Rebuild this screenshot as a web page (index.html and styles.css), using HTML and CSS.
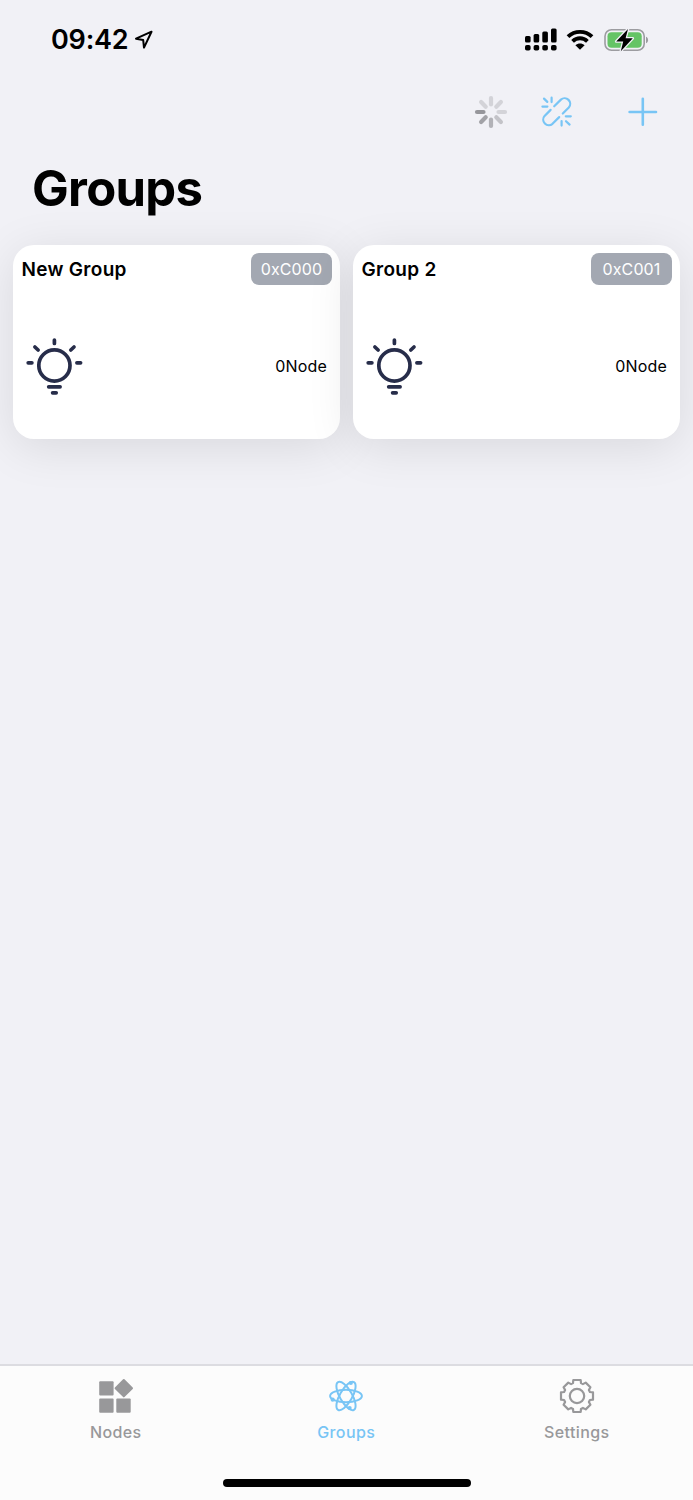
FILE: index.html
```
<!DOCTYPE html>
<html lang="en">
<head>
    <meta charset="UTF-8">
    <meta name="viewport" content="width=device-width, initial-scale=1.0">
    <title>Groups</title>
    <link rel="stylesheet" href="styles.css">
</head>
<body>
    <!-- Shared bulb icon -->
    <svg class="sprite" width="0" height="0">
        <symbol id="bulb" viewBox="0 0 60 60">
            <g fill="none" stroke="#272d4a" stroke-width="3.7" stroke-linecap="round">
                <circle cx="30.4" cy="28.5" r="15.6"/>
                <path d="M30.4 3v3.5M10.9 10l3.2 3M50 10l-3.2 3M4.2 25.8h3.7M52.9 25.8h3.7M24.7 49.8h11.4M28.6 55.8h3.6"/>
            </g>
        </symbol>
    </svg>

    <div class="status-bar">
        <span class="time">09:42</span>
        <svg class="location" width="20" height="20" viewBox="0 0 20 20">
            <path d="M17.5 1.7L2 8.7l7.2 1.4.8 7.5z" fill="none" stroke="#000" stroke-width="2" stroke-linejoin="round"/>
        </svg>
        <svg class="signal" width="32" height="24" viewBox="0 0 32 24">
            <rect x="0" y="8" width="5.6" height="6.5" rx="1.5"/>
            <rect x="8.6" y="6" width="5.6" height="8.5" rx="1.5"/>
            <rect x="17.3" y="3.5" width="5.6" height="11" rx="1.5"/>
            <rect x="26" y="0.5" width="5.6" height="14" rx="1.5"/>
            <rect x="0" y="17" width="5.6" height="5.6" rx="1.8"/>
            <rect x="8.6" y="17" width="5.6" height="5.6" rx="1.8"/>
            <rect x="17.3" y="17" width="5.6" height="5.6" rx="1.8"/>
            <rect x="26" y="17" width="5.6" height="5.6" rx="1.8"/>
        </svg>
        <svg class="wifi" width="28" height="22" viewBox="0 0 28 22">
            <path d="M2 7.7C8.7 1.2 19.3 1.2 26 7.7M6.6 12.3c4.2-4 10.6-4 14.8 0" fill="none" stroke="#000" stroke-width="3.9"/>
            <path d="M9.4 16.3c2.6-2.3 6.6-2.3 9.2 0L14 20.8z"/>
        </svg>
        <svg class="battery" width="46" height="26" viewBox="0 0 46 26">
            <rect x="1" y="2.7" width="39.2" height="20.6" rx="6.5" fill="none" stroke="#9c9ca0" stroke-width="1.6"/>
            <rect x="3.5" y="5.3" width="34.2" height="15.4" rx="4" fill="#65c466"/>
            <path d="M42 9.7c2.8 1.2 2.8 5.4 0 6.6z" fill="#9c9ca0"/>
            <path d="M24 2L12.2 14.5h7L16.8 24.2l12-12.9h-7.2z" fill="#000" stroke="#f1f1f6" stroke-width="2.6" stroke-linejoin="round" paint-order="stroke"/>
        </svg>
    </div>

    <div class="toolbar">
        <svg class="spinner" width="34" height="34" viewBox="-17 -17 34 34">
            <g fill="none" stroke="#d3d3d8" stroke-width="4.2" stroke-linecap="round">
                <path d="M0-7.5V-14"/>
                <path d="M5.3-5.3l4.6-4.6"/>
                <path d="M7.5 0H14"/>
                <path d="M-5.3-5.3l-4.6-4.6"/>
                <path d="M5.3 5.3l4.6 4.6" stroke="#c3c3c8"/>
                <path d="M0 7.5V14" stroke="#b2b2b7"/>
                <path d="M-5.3 5.3l-4.6 4.6" stroke="#a2a2a7"/>
                <path d="M-7.5 0H-14" stroke="#96969b"/>
            </g>
        </svg>
        <svg class="unlink" width="32" height="32" viewBox="0 0 32 32">
            <g fill="none" stroke="#78c5f5" stroke-width="2.2" stroke-linecap="round">
                <path d="M13.2 10.3l6.7-6.7a5.6 5.6 0 0 1 7.9 7.9l-6 6"/>
                <path d="M18.2 21.1l-6.7 6.7a5.6 5.6 0 0 1-7.9-7.9l6-6"/>
                <path d="M3 2.6l3.3 3.3M10.6 1.7v4.4M1.4 10.6h5M24.8 20.3h5M20.6 25v4.6M25 25.2l3.6 3.4"/>
            </g>
        </svg>
        <svg class="plus" width="30" height="30" viewBox="0 0 30 30">
            <path d="M14.8 1.8v26M1.6 15H28" fill="none" stroke="#78c5f5" stroke-width="2.6" stroke-linecap="round"/>
        </svg>
    </div>

    <h1>Groups</h1>

    <div class="groups">
        <div class="card">
            <div class="card-header">
                <span class="name">New Group</span>
                <span class="address">0xC000</span>
            </div>
            <div class="card-body">
                <svg width="60" height="60"><use href="#bulb"/></svg>
                <span class="count">0Node</span>
            </div>
        </div>
        <div class="card">
            <div class="card-header">
                <span class="name">Group 2</span>
                <span class="address">0xC001</span>
            </div>
            <div class="card-body">
                <svg width="60" height="60"><use href="#bulb"/></svg>
                <span class="count">0Node</span>
            </div>
        </div>
    </div>

    <div class="tab-bar">
        <div class="tabs">
            <div class="tab">
                <svg width="36" height="36" viewBox="0 0 36 36" fill="currentColor">
                    <rect x="1.2" y="3.2" width="14.4" height="14.4" rx="1"/>
                    <rect x="1.2" y="20.4" width="14.4" height="14.4" rx="1"/>
                    <rect x="18.3" y="20.4" width="14.4" height="14.4" rx="1"/>
                    <rect x="19" y="3.4" width="13.6" height="13.6" rx="1" transform="rotate(45 25.8 10.2)"/>
                </svg>
                <span>Nodes</span>
            </div>
            <div class="tab active">
                <svg width="36" height="36" viewBox="-18 -18 36 36">
                    <g fill="none" stroke="currentColor" stroke-width="2">
                        <ellipse rx="15.9" ry="6.2"/>
                        <ellipse rx="15.9" ry="6.2" transform="rotate(60)"/>
                        <ellipse rx="15.9" ry="6.2" transform="rotate(120)"/>
                    </g>
                    <g fill="currentColor">
                        <circle cx="4.8" cy="-13" r="2.1"/>
                        <circle cx="-13.3" cy="3.7" r="2.1"/>
                        <circle cx="3.6" cy="12" r="2.1"/>
                    </g>
                </svg>
                <span>Groups</span>
            </div>
            <div class="tab">
                <svg width="36" height="36" viewBox="-18 -18 36 36">
                    <g fill="none" stroke="currentColor" stroke-width="2.2" stroke-linejoin="round">
                        <circle r="7.2"/>
                        <path d="M-3.7-16H3.7L4-12.9 5.9-11.9 8.7-13.4 13.4-8.7 11.9-5.9 12.9-4 16-3.7V3.7L12.9 4 11.9 5.9 13.4 8.7 8.7 13.4 5.9 11.9 4 12.9 3.7 16H-3.7L-4 12.9-5.9 11.9-8.7 13.4-13.4 8.7-11.9 5.9-12.9 4-16 3.7V-3.7L-12.9-4-11.9-5.9-13.4-8.7-8.7-13.4-5.9-11.9-4-12.9z"/>
                    </g>
                </svg>
                <span>Settings</span>
            </div>
        </div>
        <div class="home-indicator"></div>
    </div>
</body>
</html>
```
FILE: styles.css
```
* {
    box-sizing: border-box;
}

body {
    font-family: Inter, "Liberation Sans", sans-serif;
    display: flex;
    flex-direction: column;
    height: 1500px;
    margin: 0;
    background-color: #f1f1f6;
    color: #000;
}

svg {
    display: block;
    flex-shrink: 0;
}

.sprite {
    position: absolute;
}

.status-bar {
    display: flex;
    align-items: center;
    height: 79px;
    padding: 0 43px 0 51px;
}

.time {
    width: 83px;
    font-size: 27px;
    font-weight: 600;
    letter-spacing: -0.2px;
    white-space: nowrap;
}

.signal {
    margin-left: auto;
}

.wifi {
    margin-left: 9px;
}

.battery {
    margin-left: 10px;
}

.toolbar {
    display: flex;
    align-items: center;
    justify-content: flex-end;
    height: 65px;
    padding-right: 35px;
}

.unlink {
    margin-left: 33px;
}

.plus {
    margin-left: 55px;
}

h1 {
    margin: 0;
    padding: 15px 0 0 32px;
    height: 101px;
    font-size: 49px;
    line-height: 59px;
    font-weight: 700;
    letter-spacing: -0.7px;
}

.groups {
    display: grid;
    grid-template-columns: 1fr 1fr;
    gap: 13px;
    padding: 0 13px;
}

.card {
    height: 194px;
    background-color: #fff;
    border-radius: 21px;
    box-shadow: 0 8px 48px rgba(0, 0, 0, 0.1);
}

.card-header {
    display: flex;
    align-items: center;
    justify-content: space-between;
    padding: 8px 8px 0 8.5px;
}

.name {
    font-size: 19px;
    font-weight: 600;
    letter-spacing: 0.3px;
}

.address {
    width: 81px;
    height: 32px;
    border-radius: 8px;
    background-color: #a3a8b2;
    color: #fff;
    font-size: 16px;
    line-height: 33px;
    text-align: center;
    letter-spacing: 0.1px;
}

.card-body {
    display: flex;
    align-items: center;
    justify-content: space-between;
    padding: 52px 13px 0 11px;
}

.count {
    padding-bottom: 2px;
    font-size: 16px;
    letter-spacing: 0.2px;
}

.tab-bar {
    display: flex;
    flex-direction: column;
    height: 136px;
    margin-top: auto;
    border-top: 2px solid #dcdce1;
    background-color: #fcfcfc;
}

.tabs {
    display: grid;
    grid-template-columns: repeat(3, 230.5px);
    padding: 12px 0 0 0.5px;
}

.tab {
    display: flex;
    flex-direction: column;
    align-items: center;
    gap: 7px;
    color: #98989a;
    font-size: 16px;
    line-height: 22px;
    font-weight: 500;
    letter-spacing: 0.4px;
}

.tab.active {
    color: #78c5f5;
}

.home-indicator {
    width: 248px;
    height: 8px;
    margin: auto auto 13px;
    border-radius: 4px;
    background-color: #000;
}
```
